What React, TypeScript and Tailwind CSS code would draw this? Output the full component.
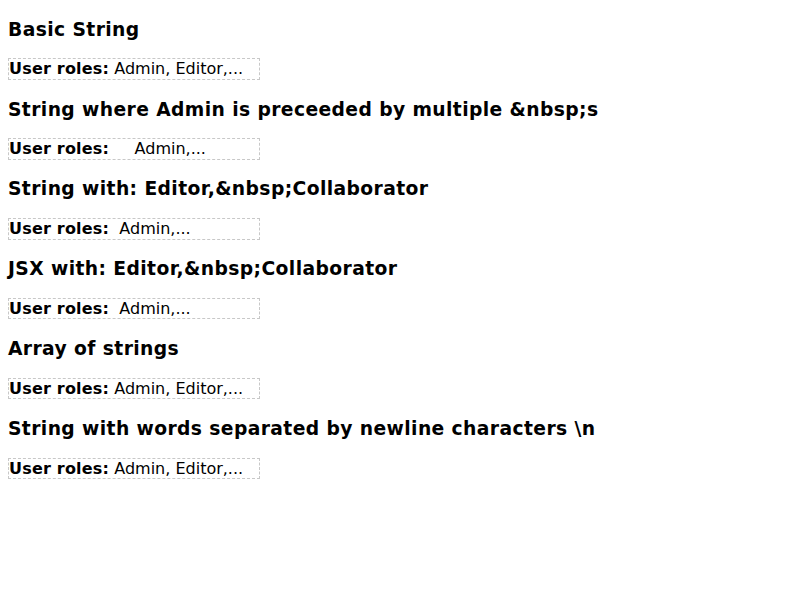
const sections: { title: string; roles: string }[] = [
  { title: "Basic String", roles: "Admin, Editor,..." },
  { title: "String where Admin is preceeded by multiple &nbsp;s", roles: "\u00a0\u00a0\u00a0\u00a0Admin,..." },
  { title: "String with: Editor,&nbsp;Collaborator", roles: "\u00a0Admin,..." },
  { title: "JSX with: Editor,&nbsp;Collaborator", roles: "\u00a0Admin,..." },
  { title: "Array of strings", roles: "Admin, Editor,..." },
  { title: "String with words separated by newline characters \\n", roles: "Admin, Editor,..." },
];

export default function App() {
  return (
    <div className="px-2 bg-white text-black font-[family-name:'DejaVu_Sans',sans-serif]">
      {sections.map((s) => (
        <div key={s.title}>
          <h3 className="my-[18.72px] text-[18.72px] leading-[21px] tracking-[0.4px] font-bold">{s.title}</h3>
          <div className="w-[252px] border border-dashed border-[#c8c8c8] text-base leading-[19.4px] whitespace-nowrap overflow-hidden">
            <b className="tracking-[0.2px]">User roles:</b> {s.roles}
          </div>
        </div>
      ))}
    </div>
  );
}
